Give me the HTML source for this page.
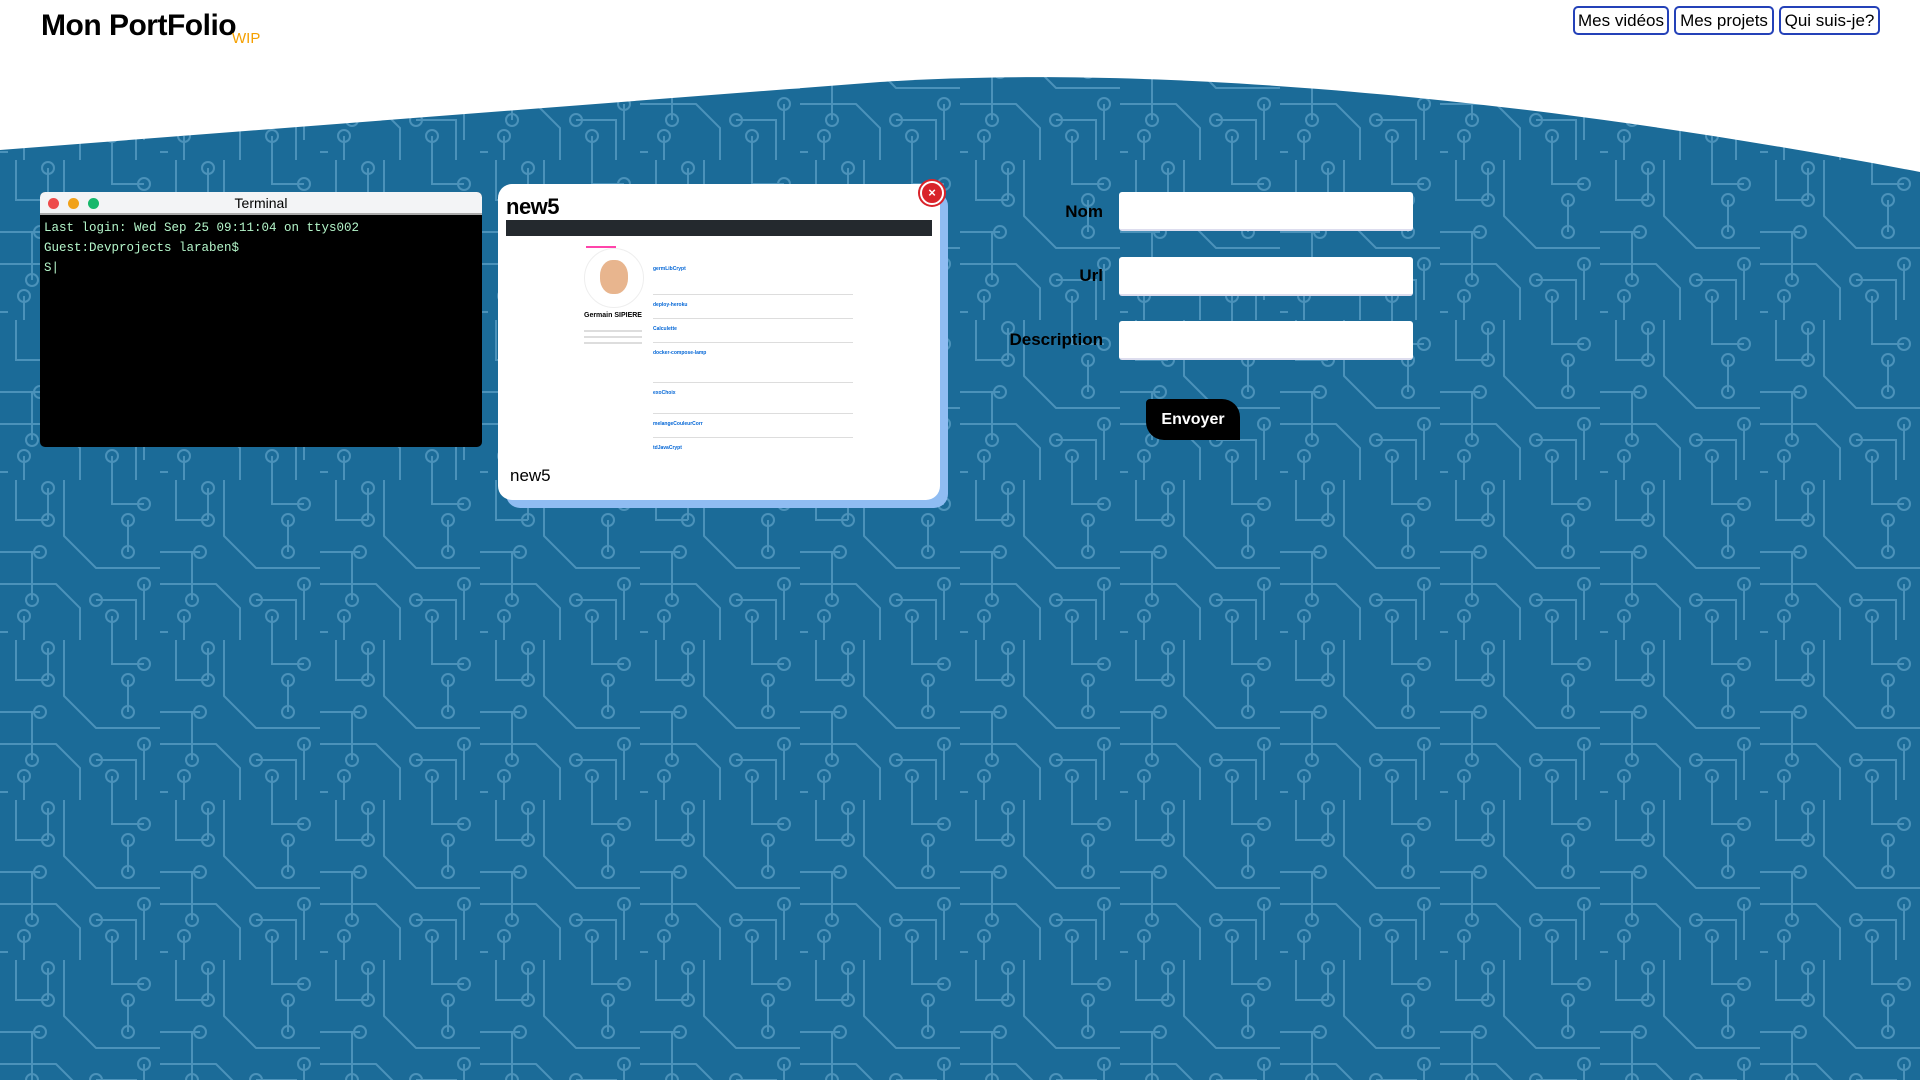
<!DOCTYPE html>
<html><head><meta charset="utf-8"><style>
*{margin:0;padding:0;box-sizing:border-box}
body{width:1920px;height:1080px;overflow:hidden;background:#fff;font-family:"Liberation Sans",sans-serif;position:relative}
.abs{position:absolute}
.title{left:41px;top:9px;font-size:30px;font-weight:bold;color:#000;letter-spacing:-0.5px}
.wip{left:232px;top:30px;font-size:15px;color:#f5a000}
.nav{top:6px;height:29px;border:2px solid #2441b8;border-radius:5px;font-size:17px;color:#000;display:flex;align-items:center;justify-content:center;background:#fff}
.term{left:40px;top:192px;width:442px;height:255px;background:#000;border-radius:5px;overflow:hidden}
.term .hd{height:23px;background:#f3f4f6;border-bottom:2px solid #aaa;position:relative;text-align:center;font-size:14px;line-height:22px;color:#000}
.dot{position:absolute;top:6px;width:11px;height:11px;border-radius:50%}
.term pre{font-family:"Liberation Mono",monospace;color:#b4f5c9;font-size:12.5px;line-height:20px;padding:3px 4px}
.card{left:498px;top:184px;width:442px;height:316px;background:#fff;border-radius:14px;box-shadow:8px 8px 0 #8fbcf2}
.lbl{font-size:17px;font-weight:bold;text-align:right;width:200px;left:903px}
.inp{left:1119px;width:294px;height:39px;background:#fff;border-radius:3px;border-bottom:2px solid #dde}
.btn{left:1146px;top:399px;width:94px;height:41px;background:#000;color:#fff;font-weight:bold;font-size:16px;display:flex;align-items:center;justify-content:center;border-radius:4px 18px 0 18px}
.g{background:#ddd;height:2px;position:absolute}
</style></head><body>
<svg class="abs" style="left:0;top:0" width="1920" height="1080">
<defs>
<pattern id="p" width="160" height="160" patternUnits="userSpaceOnUse">
<rect width="160" height="160" fill="#1b6b98"/>
<g stroke="#4b92ba" stroke-width="2" fill="none">
<path d="M16 0V40H48M64 0V56L96 88H160M112 0V24H144M0 72H40M0 104H56L80 128V160M96 120H136V160M128 40V72M24 136V160M0 152H8"/>
<path d="M32 72V120M144 104V140M112 136V160M48 40V8"/>
<circle cx="48" cy="40" r="6"/><circle cx="144" cy="24" r="6"/><circle cx="40" cy="72" r="6"/><circle cx="32" cy="120" r="6"/><circle cx="128" cy="72" r="6"/><circle cx="128" cy="40" r="6"/><circle cx="144" cy="104" r="6"/><circle cx="96" cy="120" r="6"/><circle cx="24" cy="136" r="6"/><circle cx="48" cy="8" r="6"/><circle cx="112" cy="136" r="6"/>
</g></pattern></defs>
<path d="M0 150 L880 82 C1120 66 1480 88 1920 172 L1920 1080 L0 1080Z" fill="url(#p)"/>
</svg>
<div class="abs title">Mon PortFolio</div>
<div class="abs wip">WIP</div>
<div class="abs nav" style="left:1573px;width:96px">Mes vidéos</div>
<div class="abs nav" style="left:1674px;width:100px">Mes projets</div>
<div class="abs nav" style="left:1779px;width:101px">Qui suis-je?</div>

<div class="abs term"><div class="hd"><span class="dot" style="left:8px;background:#ee4b4b"></span><span class="dot" style="left:28px;background:#f1a21a"></span><span class="dot" style="left:48px;background:#17b86c"></span>Terminal</div>
<pre>Last login: Wed Sep 25 09:11:04 on ttys002
Guest:Devprojects laraben$
S|</pre></div>

<div class="abs card">
<div class="abs" style="left:8px;top:10px;font-size:22px;font-weight:bold;letter-spacing:-0.5px">new5</div>
<div class="abs" style="left:8px;top:36px;width:426px;height:245px;background:#fff;overflow:hidden">
 <div style="height:16px;background:#24292e"></div>
 <div class="abs" style="left:80px;top:26px;width:30px;height:2px;background:#f4a"></div>
 <div class="abs" style="left:78px;top:28px;width:60px;height:60px;border-radius:50%;border:1px solid #eee;background:#fff"></div>
 <div class="abs" style="left:94px;top:40px;width:28px;height:34px;border-radius:45%;background:#e8b58e"></div>
 <div class="abs" style="left:78px;top:92px;font-size:7px;font-weight:bold">Germain SIPIERE</div>
 <div class="g" style="left:78px;top:110px;width:58px"></div><div class="g" style="left:78px;top:116px;width:58px"></div><div class="g" style="left:78px;top:122px;width:58px"></div>
 <div class="abs" style="left:147px;top:47px;font-size:5px;color:#0366d6;font-weight:bold;line-height:1">germLibCrypt</div>
 <div class="abs" style="left:147px;top:82px;font-size:5px;color:#0366d6;font-weight:bold">deploy-heroku</div>
 <div class="abs" style="left:147px;top:106px;font-size:5px;color:#0366d6;font-weight:bold">Calculette</div>
 <div class="abs" style="left:147px;top:130px;font-size:5px;color:#0366d6;font-weight:bold">docker-compose-lamp</div>
 <div class="abs" style="left:147px;top:170px;font-size:5px;color:#0366d6;font-weight:bold">exoChoix</div>
 <div class="abs" style="left:147px;top:201px;font-size:5px;color:#0366d6;font-weight:bold">melangeCouleurCorr</div>
 <div class="abs" style="left:147px;top:225px;font-size:5px;color:#0366d6;font-weight:bold">tdJavaCrypt</div>
 <div class="g" style="left:147px;top:74px;width:200px;height:1px"></div><div class="g" style="left:147px;top:98px;width:200px;height:1px"></div><div class="g" style="left:147px;top:122px;width:200px;height:1px"></div><div class="g" style="left:147px;top:162px;width:200px;height:1px"></div><div class="g" style="left:147px;top:193px;width:200px;height:1px"></div><div class="g" style="left:147px;top:217px;width:200px;height:1px"></div>
</div>
<div class="abs" style="left:12px;top:282px;font-size:17px">new5</div>
<div class="abs" style="left:422px;top:-3px;width:24px;height:24px;border-radius:50%;background:#d9232a;border:2px solid #fff;box-shadow:0 0 0 2px #d9232a;color:#fff;font-size:13px;font-weight:bold;text-align:center;line-height:19px">×</div>
</div>

<div class="abs lbl" style="top:202px">Nom</div>
<div class="abs lbl" style="top:266px">Url</div>
<div class="abs lbl" style="top:330px">Description</div>
<div class="abs inp" style="top:192px"></div>
<div class="abs inp" style="top:257px"></div>
<div class="abs inp" style="top:321px"></div>
<div class="abs btn">Envoyer</div>
</body></html>
